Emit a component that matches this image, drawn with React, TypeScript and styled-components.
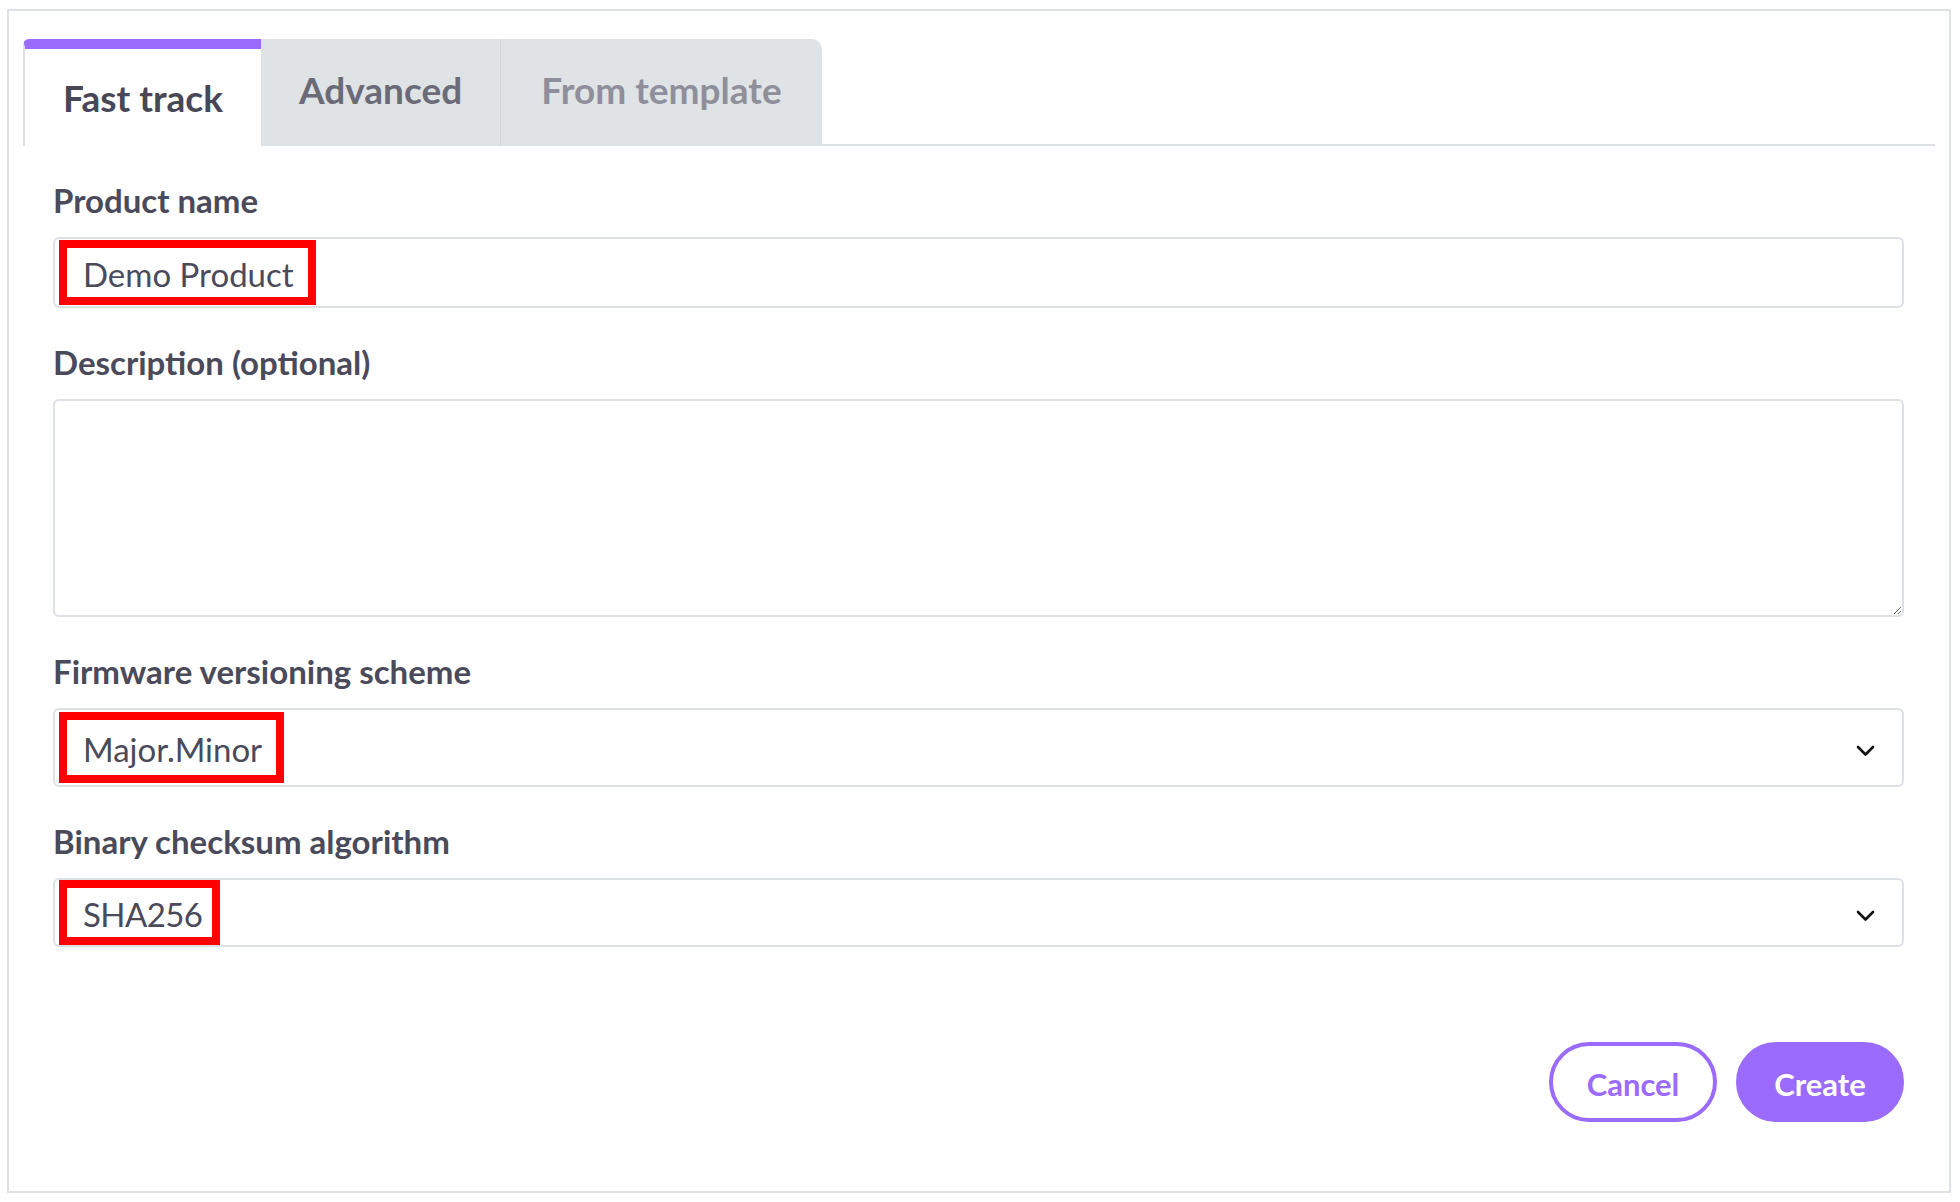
import React from 'react';
import styled, { createGlobalStyle } from 'styled-components';

const PURPLE = '#9a6bfc';
const LINE = '#dde1e6';
const TEXT = '#4a4a5a';

interface FieldValue {
  label: string;
  value: string;
  height: number;
  markHeight: number;
}

const selects: FieldValue[] = [
  { label: 'Firmware versioning scheme', value: 'Major.Minor', height: 79, markHeight: 71 },
  { label: 'Binary checksum algorithm', value: 'SHA256', height: 69, markHeight: 65 }
];

const tabs = ['Fast track', 'Advanced', 'From template'];

const Chevron = () => (
  <svg width='19' height='12' viewBox='0 0 19 12'>
    <polyline
      points='2,2 9.5,9.5 17,2'
      fill='none'
      stroke='#111'
      strokeWidth='2.6'
      strokeLinecap='round'
      strokeLinejoin='round'
    />
  </svg>
);

const App = () => {
  return (
    <>
      <GlobalStyle />
      <Frame>
        <TabBar>
          {tabs.map((tab, index) => (
            <Tab key={tab} $active={index === 0} $index={index}>
              {tab}
            </Tab>
          ))}
        </TabBar>
        <Form>
          <Label>Product name</Label>
          <Field $height={71}>
            <Mark $height={65}>Demo Product</Mark>
          </Field>

          <Label>Description (optional)</Label>
          <TextArea />

          {selects.map(item => (
            <React.Fragment key={item.label}>
              <Label>{item.label}</Label>
              <Field $height={item.height}>
                <Mark $height={item.markHeight} $tight={item.value === 'SHA256'}>
                  {item.value}
                </Mark>
                <Arrow>
                  <Chevron />
                </Arrow>
              </Field>
            </React.Fragment>
          ))}

          <Footer>
            <Button>Cancel</Button>
            <Button $primary>Create</Button>
          </Footer>
        </Form>
      </Frame>
    </>
  );
};

const GlobalStyle = createGlobalStyle`
  body {
    margin: 0;
    background: #fff;
    font-family: Lato, 'Noto Sans', sans-serif;
  }
`;

const Frame = styled.div`
  box-sizing: border-box;
  width: 1944px;
  height: 1184px;
  margin: 9px 0 0 7px;
  border: 2px solid ${LINE};
  padding: 28px 14px 0;
`;

const TabBar = styled.div`
  display: flex;
  border-bottom: 2px solid ${LINE};
`;

const Tab = styled.div<{ $active: boolean; $index: number }>`
  box-sizing: border-box;
  display: flex;
  align-items: center;
  height: 107px;
  margin-bottom: -2px;
  padding: 0 ${({ $index }) => ($index === 2 ? 40 : 38)}px;
  font-size: 37px;
  font-weight: 700;
  white-space: nowrap;
  color: ${({ $index }) => ['#474756', '#6b6b78', '#8f8f9b'][$index]};
  background: ${({ $active }) => ($active ? '#fff' : '#dfe3e6')};
  border-top: ${({ $active }) => ($active ? `10px solid ${PURPLE}` : 'none')};
  border-left: ${({ $active, $index }) =>
    $active ? `2px solid ${LINE}` : $index > 1 ? '1px solid #d2d7dc' : 'none'};
  border-top-left-radius: ${({ $active }) => ($active ? '6px' : '0')};
  border-top-right-radius: ${({ $index }) => ($index === 2 ? '10px' : '0')};
  padding-bottom: ${({ $active }) => ($active ? '0' : '6px')};
`;

const Form = styled.div`
  display: flex;
  flex-direction: column;
  padding: 34px 31px 0 30px;
`;

const Label = styled.div`
  height: 40px;
  line-height: 40px;
  margin-bottom: 17px;
  font-size: 33px;
  font-weight: 700;
  color: ${TEXT};
  white-space: nowrap;
`;

const Field = styled.div<{ $height: number }>`
  box-sizing: border-box;
  display: flex;
  align-items: center;
  justify-content: space-between;
  height: ${({ $height }) => $height}px;
  margin-bottom: 34px;
  padding: 0 27px 0 4px;
  border: 2px solid ${LINE};
  border-radius: 6px;
`;

const Mark = styled.span<{ $height: number; $tight?: boolean }>`
  box-sizing: border-box;
  display: flex;
  align-items: center;
  height: ${({ $height }) => $height}px;
  padding: 3px ${({ $tight }) => ($tight ? 10 : 14)}px 0 16px;
  border: 8px solid #ff0000;
  font-size: 33px;
  letter-spacing: ${({ $tight }) => ($tight ? '-0.6px' : '0')};
  color: ${TEXT};
  white-space: nowrap;
`;

const Arrow = styled.span`
  display: flex;
  align-items: center;
  margin-top: 6px;
`;

const TextArea = styled.textarea`
  box-sizing: border-box;
  display: block;
  width: 100%;
  height: 218px;
  margin: 0 0 34px;
  border: 2px solid ${LINE};
  border-radius: 6px;
  font-family: inherit;
  font-size: 33px;
`;

const Footer = styled.div`
  display: flex;
  justify-content: flex-end;
  gap: 19px;
  margin-top: 61px;
`;

const Button = styled.button<{ $primary?: boolean }>`
  box-sizing: border-box;
  width: 168px;
  height: 80px;
  border-radius: 40px;
  border: 4px solid ${PURPLE};
  background: ${({ $primary }) => ($primary ? PURPLE : '#fff')};
  color: ${({ $primary }) => ($primary ? '#fff' : PURPLE)};
  font-family: inherit;
  font-size: 31px;
  font-weight: 700;
  padding: 4px 0 0;
  cursor: pointer;
`;

export default App;
